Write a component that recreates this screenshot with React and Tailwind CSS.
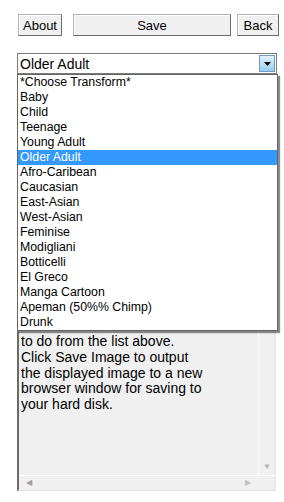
import React from "react";

const OPTIONS = [
  "*Choose Transform*",
  "Baby",
  "Child",
  "Teenage",
  "Young Adult",
  "Older Adult",
  "Afro-Caribean",
  "Caucasian",
  "East-Asian",
  "West-Asian",
  "Feminise",
  "Modigliani",
  "Botticelli",
  "El Greco",
  "Manga Cartoon",
  "Apeman (50%% Chimp)",
  "Drunk",
];

// only the part of the help text that shows below the open list
const HELP = [
  "to do from the list above.",
  "Click Save Image to output",
  "the displayed image to a new",
  "browser window for saving to",
  "your hard disk.",
];

const btn =
  "h-[22px] border border-[#b5b5b5] border-r-[#6a6a6a] border-b-[#6a6a6a] bg-[#f0f0f0] shadow-[inset_1px_1px_0_#ffffff] text-[13px] text-black leading-none";

export default function App() {
  const selected = "Older Adult";

  return (
    <div className="w-[284px] h-[502px] bg-white font-['Liberation_Sans',Arial,sans-serif] text-black overflow-hidden">
      <div className="pl-[17px] pt-[14px]">
        {/* toolbar */}
        <div className="flex items-center">
          <button className={`${btn} ml-[1px] w-[44px]`}>About</button>
          <button className={`${btn} ml-[11px] w-[158px]`}>Save</button>
          <button className={`${btn} ml-[6px] w-[42px]`}>Back</button>
        </div>

        {/* select with open list */}
        <div className="relative mt-[17px] w-[260px]">
          <div className="flex h-[21px] items-center border border-[#7a7a7a] bg-white pl-[2px]">
            <span className="flex-1 text-[14px] leading-none">{selected}</span>
            <span className="mr-[1px] flex h-[17px] w-[16px] items-center justify-center border border-[#6f9cc4] bg-gradient-to-b from-[#e4f1fb] to-[#98cdf0]">
              <svg width="7" height="4" viewBox="0 0 7 4">
                <path d="M0 0H7L3.5 4Z" fill="#000" />
              </svg>
            </span>
          </div>

          <ul className="absolute left-0 top-[21px] z-10 w-[261px] border border-[#646464] bg-white shadow-[2px_2px_1px_rgba(0,0,0,0.45)]">
            {OPTIONS.map((o) => (
              <li
                key={o}
                className={`h-[15px] pl-[2px] text-[12.3px] leading-[15px] whitespace-nowrap ${
                  o === selected ? "bg-[#3399ff] text-white" : ""
                }`}
              >
                {o}
              </li>
            ))}
          </ul>
        </div>

        {/* help text area */}
        <div className="mt-[14px] flex h-[403px] w-[259px] flex-col border-l-2 border-t-2 border-l-[#6a6a6a] border-t-[#6a6a6a] border-r border-b border-r-[#e3e3e3] border-b-[#e3e3e3] bg-[#f0f0f0]">
          <div className="flex flex-1 overflow-hidden">
            <div className="flex-1 overflow-hidden pl-[2px] pt-[244px] text-[14px] leading-[15.75px]">
              {HELP.map((l, i) => (
                <div key={i} className="h-[15.75px] whitespace-nowrap">
                  {l}
                </div>
              ))}
            </div>
            <div className="flex w-[17px] flex-col justify-end border-l border-l-white pb-[4px]">
              <span className="text-center text-[8px] leading-none text-[#b0b0b0]">▼</span>
            </div>
          </div>
          <div className="flex h-[15px] items-center border-t border-t-white">
            <span className="ml-[7px] text-[8px] leading-none text-[#a0a0a0]">◀</span>
            <span className="ml-auto mr-[24px] text-[8px] leading-none text-[#c0c0c0]">▶</span>
          </div>
        </div>
      </div>
    </div>
  );
}
